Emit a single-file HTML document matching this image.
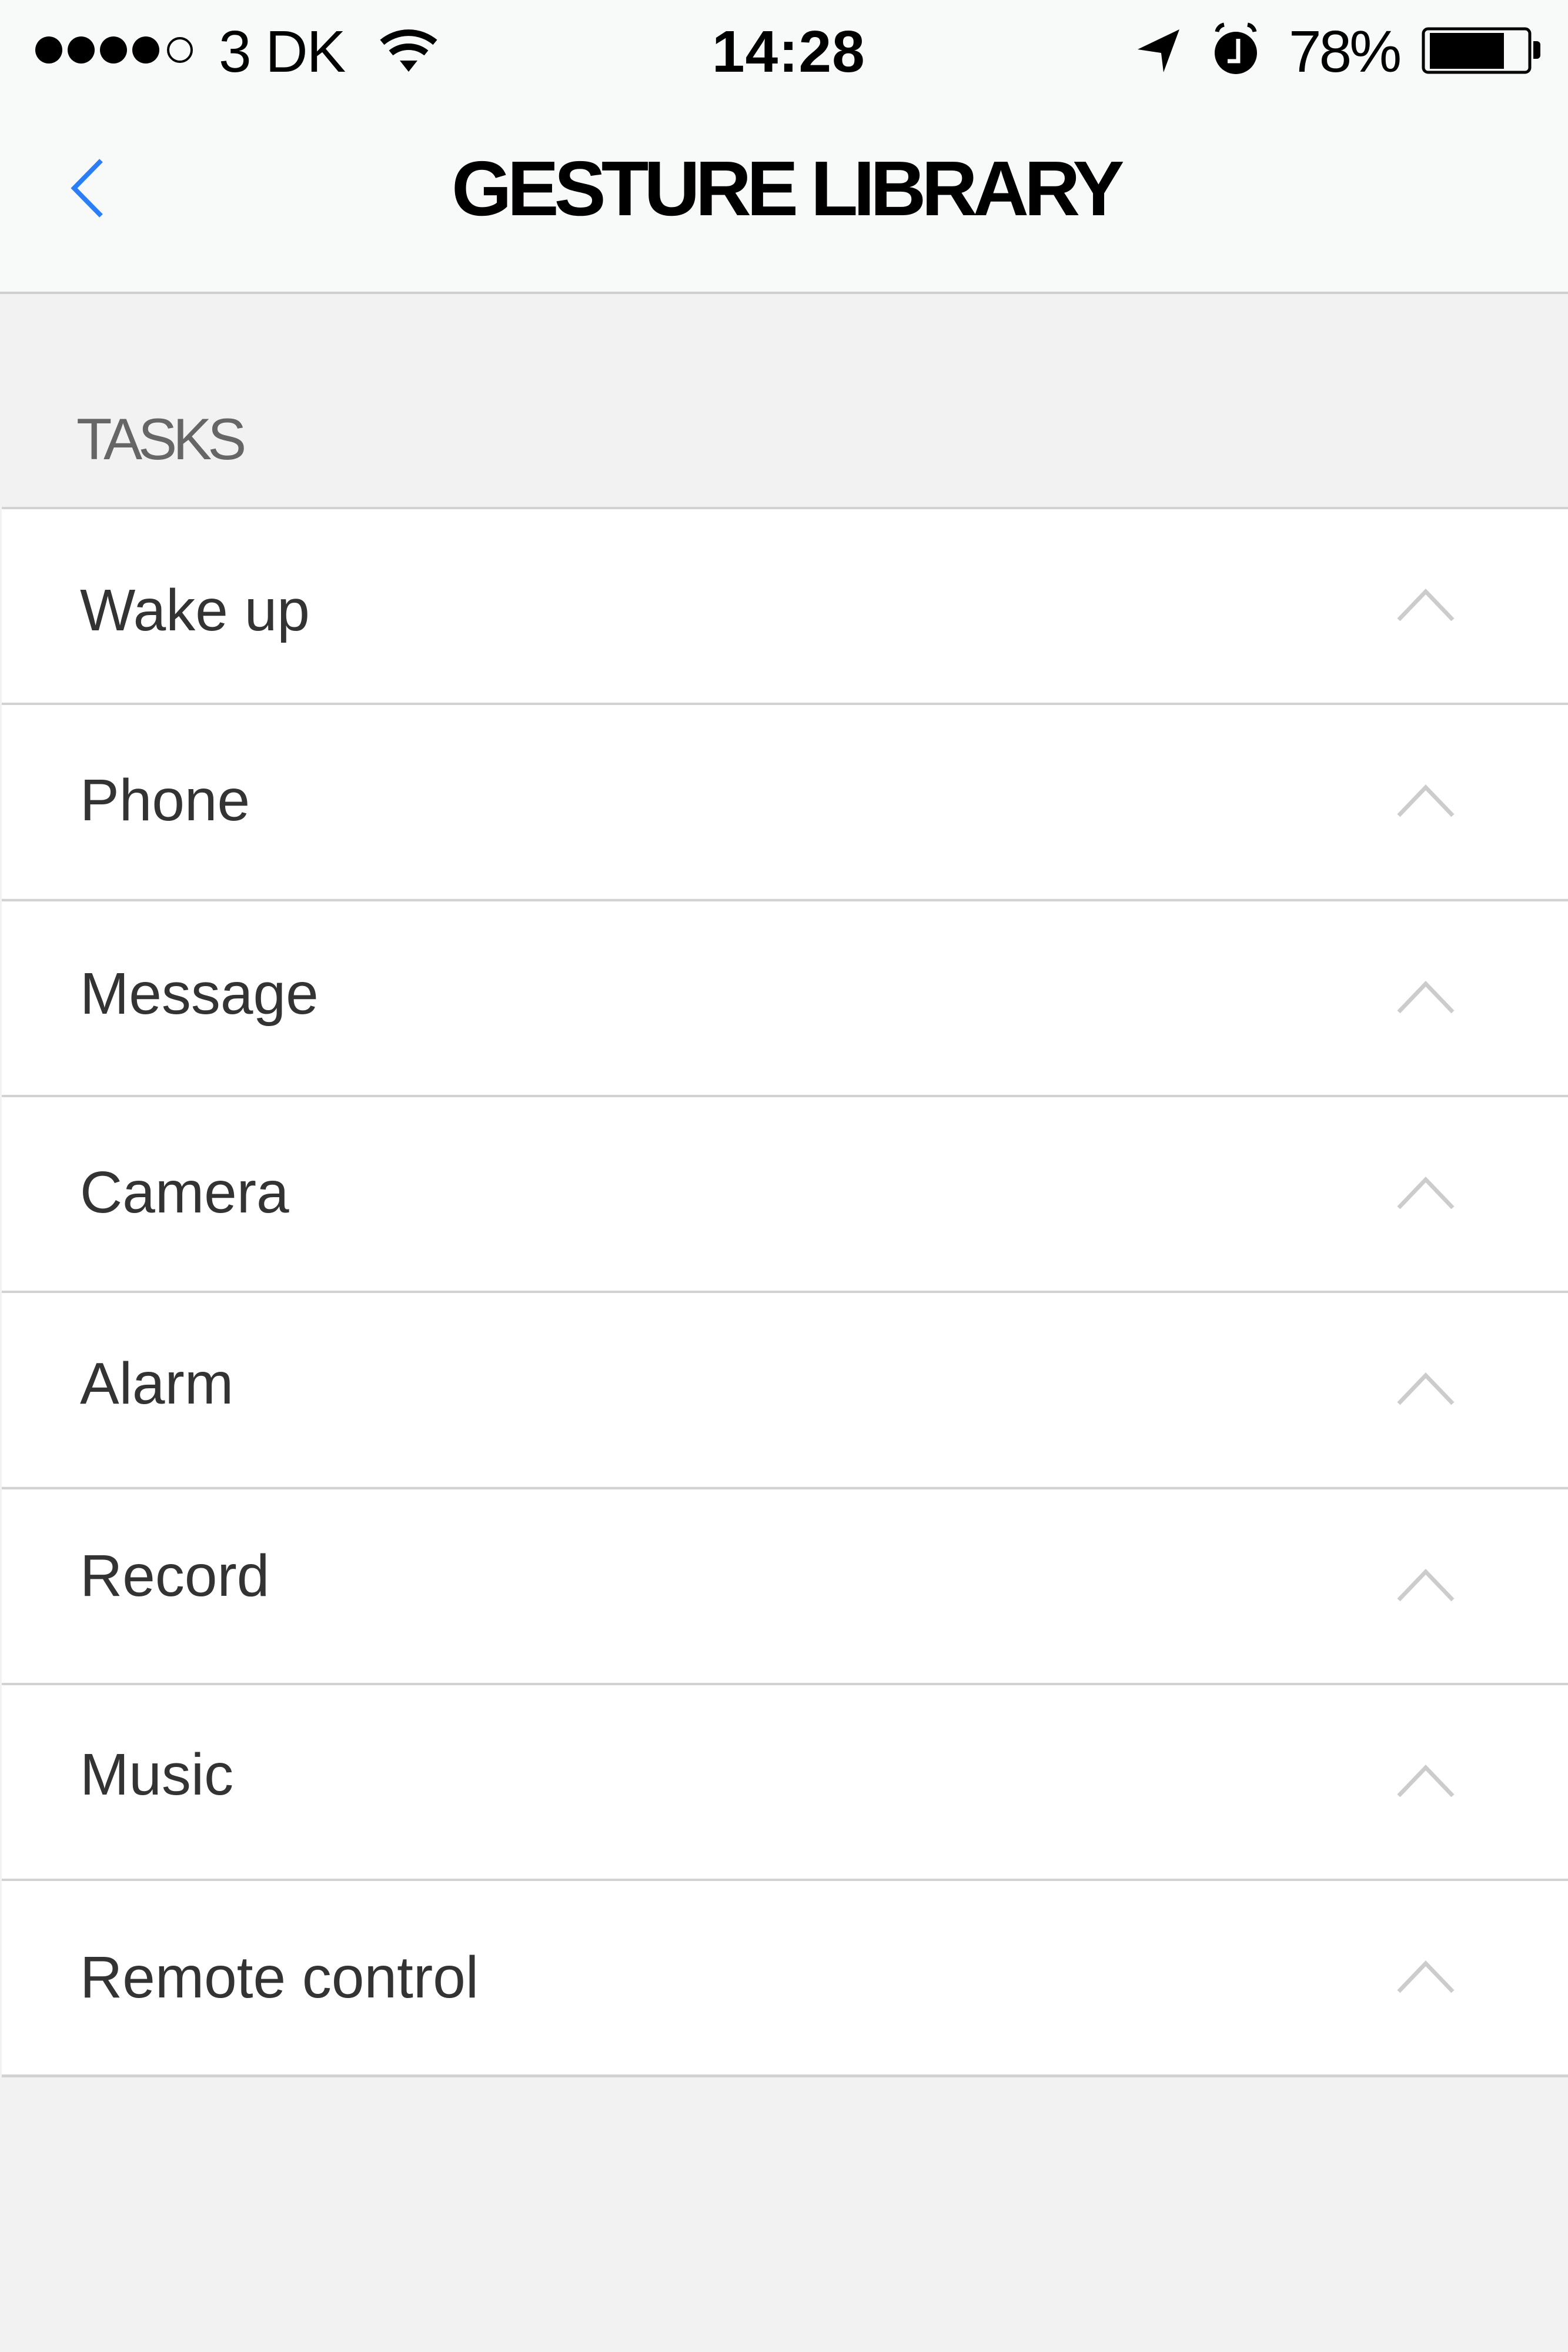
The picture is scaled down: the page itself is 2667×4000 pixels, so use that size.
<!DOCTYPE html>
<html><head><meta charset="utf-8"><style>
html,body{margin:0;padding:0}
body{width:2667px;height:4000px;background:#f2f2f2;position:relative;overflow:hidden;font-family:"Liberation Sans",sans-serif}
.abs{position:absolute;white-space:nowrap;line-height:1}
#nav{position:absolute;left:0;top:0;width:2667px;height:496px;background:#f8f9f9;border-bottom:4px solid #cfcfcf}
.row{position:absolute;left:3px;width:2664px;height:329px;background:#fff;border-top:4px solid #d2d2d2}
.row span{position:absolute;left:133px;top:122px;font-size:100px;line-height:1;color:#333;letter-spacing:0px}
.row svg{position:absolute;left:2368px;top:130px}
</style></head><body>
<div id="nav"></div>
<svg class="abs" style="left:0;top:0" width="2667" height="170">
<g fill="#000"><circle cx="83" cy="85" r="23"/><circle cx="138" cy="85" r="23"/><circle cx="193" cy="85" r="23"/><circle cx="248" cy="85" r="23"/></g>
<circle cx="306" cy="85" r="20" fill="none" stroke="#000" stroke-width="4"/>
<g fill="none" stroke="#000" stroke-width="11" stroke-linecap="butt">
<path d="M650 72 A70 70 0 0 1 740 72"/><path d="M665 90 A48 48 0 0 1 725 90"/></g>
<path d="M680 103 L710 103 L695 122 Z" fill="#000"/>
<path d="M1935 84 L2006 50 L1979 123 L1975 90 Z" fill="#000"/>
<ellipse cx="2102" cy="90" rx="36" ry="36" fill="#000"/>
<path d="M2070 54 a15 15 0 0 1 12 -12 M2134 54 a15 15 0 0 0 -12 -12" stroke="#000" stroke-width="7" fill="none"/>
<path d="M2106 66 V104 H2088" stroke="#fff" stroke-width="7" fill="none"/>
<rect x="2421" y="49" width="181" height="74" rx="8" fill="none" stroke="#000" stroke-width="5"/>
<rect x="2432" y="56" width="126" height="61" fill="#000"/>
<path d="M2608 70 h6 a6 6 0 0 1 6 6 v18 a6 6 0 0 1 -6 6 h-6z" fill="#000"/>
</svg>
<div class="abs" style="left:372px;top:38px;font-size:100px;letter-spacing:-2px">3 DK</div>
<div class="abs" style="left:1211px;top:38px;font-size:100px;font-weight:bold;letter-spacing:1px">14:28</div>
<div class="abs" style="left:2192px;top:38px;font-size:100px;letter-spacing:-4px">78%</div>
<svg class="abs" style="left:110px;top:265px" width="80" height="110"><path d="M62 8 L16 55 L62 102" fill="none" stroke="#2a7ef7" stroke-width="8"/></svg>
<div class="abs" style="left:768px;top:255px;font-size:132px;font-weight:bold;letter-spacing:-8px;color:#000">GESTURE LIBRARY</div>
<div class="abs" style="left:130px;top:697px;font-size:99px;color:#666;letter-spacing:-7px">TASKS</div>

<div class="row" style="top:862px"><span>Wake up</span><svg width="110" height="70"><path d="M8 58 L54 10 L100 58" fill="none" stroke="#ccc" stroke-width="7"/></svg></div>
<div class="row" style="top:1195px"><span style="top:112px">Phone</span><svg width="110" height="70"><path d="M8 58 L54 10 L100 58" fill="none" stroke="#ccc" stroke-width="7"/></svg></div>
<div class="row" style="top:1529px"><span style="top:107px">Message</span><svg width="110" height="70"><path d="M8 58 L54 10 L100 58" fill="none" stroke="#ccc" stroke-width="7"/></svg></div>
<div class="row" style="top:1862px"><span style="top:112px">Camera</span><svg width="110" height="70"><path d="M8 58 L54 10 L100 58" fill="none" stroke="#ccc" stroke-width="7"/></svg></div>
<div class="row" style="top:2195px"><span style="top:104px">Alarm</span><svg width="110" height="70"><path d="M8 58 L54 10 L100 58" fill="none" stroke="#ccc" stroke-width="7"/></svg></div>
<div class="row" style="top:2529px"><span style="top:97px">Record</span><svg width="110" height="70"><path d="M8 58 L54 10 L100 58" fill="none" stroke="#ccc" stroke-width="7"/></svg></div>
<div class="row" style="top:2862px"><span style="top:102px">Music</span><svg width="110" height="70"><path d="M8 58 L54 10 L100 58" fill="none" stroke="#ccc" stroke-width="7"/></svg></div>
<div class="row" style="top:3195px"><span style="top:114px">Remote control</span><svg width="110" height="70"><path d="M8 58 L54 10 L100 58" fill="none" stroke="#ccc" stroke-width="7"/></svg></div>
<div class="abs" style="left:3px;top:3528px;width:2664px;height:5px;background:#d2d2d2"></div>
</body></html>
